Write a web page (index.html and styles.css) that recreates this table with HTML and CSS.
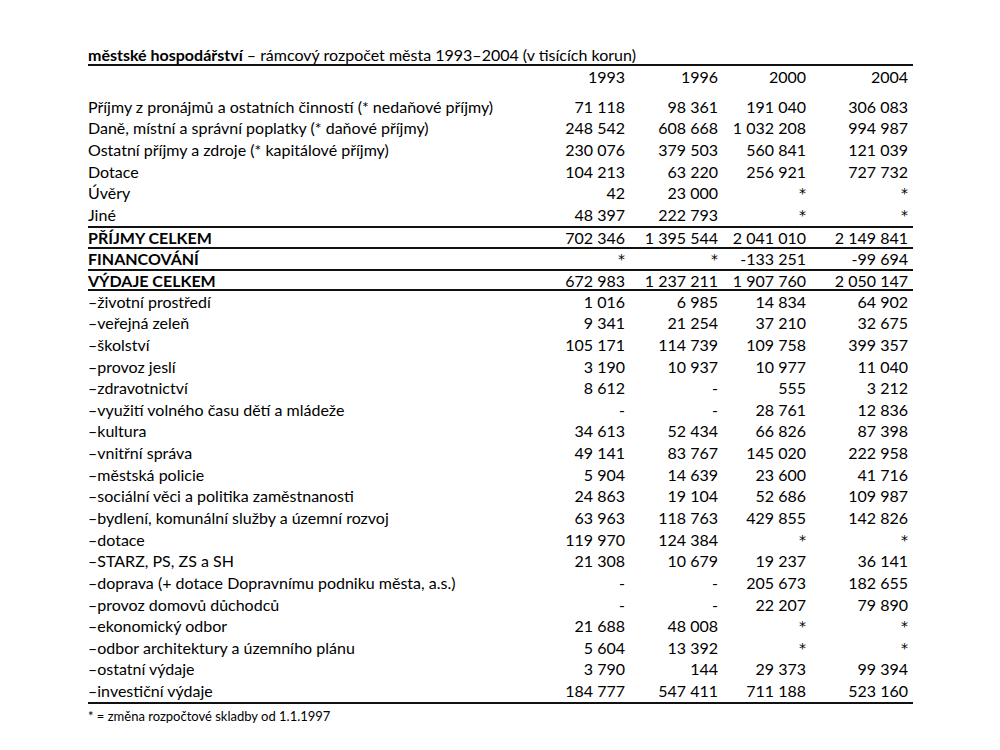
FILE: index.html
```html
<!DOCTYPE html>
<html lang="cs">
<head>
<meta charset="utf-8">
<title>městské hospodářství</title>
<link rel="stylesheet" href="styles.css">
</head>
<body>
<div class="sheet">
  <div class="title"><b>městské hospodářství</b> – rámcový rozpočet města 1993–2004 (v tisících korun)</div>
  <div class="row head"><span></span><span>1993</span><span>1996</span><span>2000</span><span>2004</span></div>
  <div class="body">
    <div class="row"><span>Příjmy z pronájmů a ostatních činností (* nedaňové příjmy)</span><span>71 118</span><span>98 361</span><span>191 040</span><span>306 083</span></div>
    <div class="row"><span>Daně, místní a správní poplatky (* daňové příjmy)</span><span>248 542</span><span>608 668</span><span>1 032 208</span><span>994 987</span></div>
    <div class="row"><span>Ostatní příjmy a zdroje (* kapitálové příjmy)</span><span>230 076</span><span>379 503</span><span>560 841</span><span>121 039</span></div>
    <div class="row"><span>Dotace</span><span>104 213</span><span>63 220</span><span>256 921</span><span>727 732</span></div>
    <div class="row"><span>Úvěry</span><span>42</span><span>23 000</span><span class="ast">*</span><span class="ast">*</span></div>
    <div class="row"><span>Jiné</span><span>48 397</span><span>222 793</span><span class="ast">*</span><span class="ast">*</span></div>
    <div class="row total"><span>PŘÍJMY CELKEM</span><span>702 346</span><span>1 395 544</span><span>2 041 010</span><span>2 149 841</span></div>
    <div class="row total"><span>FINANCOVÁNÍ</span><span class="ast">*</span><span class="ast">*</span><span>-133 251</span><span>-99 694</span></div>
    <div class="row total last"><span>VÝDAJE CELKEM</span><span>672 983</span><span>1 237 211</span><span>1 907 760</span><span>2 050 147</span></div>
    <div class="row"><span>–životní prostředí</span><span>1 016</span><span>6 985</span><span>14 834</span><span>64 902</span></div>
    <div class="row"><span>–veřejná zeleň</span><span>9 341</span><span>21 254</span><span>37 210</span><span>32 675</span></div>
    <div class="row"><span>–školství</span><span>105 171</span><span>114 739</span><span>109 758</span><span>399 357</span></div>
    <div class="row"><span>–provoz jeslí</span><span>3 190</span><span>10 937</span><span>10 977</span><span>11 040</span></div>
    <div class="row"><span>–zdravotnictví</span><span>8 612</span><span>-</span><span>555</span><span>3 212</span></div>
    <div class="row"><span>–využití volného času dětí a mládeže</span><span>-</span><span>-</span><span>28 761</span><span>12 836</span></div>
    <div class="row"><span>–kultura</span><span>34 613</span><span>52 434</span><span>66 826</span><span>87 398</span></div>
    <div class="row"><span>–vnitřní správa</span><span>49 141</span><span>83 767</span><span>145 020</span><span>222 958</span></div>
    <div class="row"><span>–městská policie</span><span>5 904</span><span>14 639</span><span>23 600</span><span>41 716</span></div>
    <div class="row"><span>–sociální věci a politika zaměstnanosti</span><span>24 863</span><span>19 104</span><span>52 686</span><span>109 987</span></div>
    <div class="row"><span>–bydlení, komunální služby a územní rozvoj</span><span>63 963</span><span>118 763</span><span>429 855</span><span>142 826</span></div>
    <div class="row"><span>–dotace</span><span>119 970</span><span>124 384</span><span class="ast">*</span><span class="ast">*</span></div>
    <div class="row"><span>–STARZ, PS, ZS a SH</span><span>21 308</span><span>10 679</span><span>19 237</span><span>36 141</span></div>
    <div class="row"><span>–doprava (+ dotace Dopravnímu podniku města, a.s.)</span><span>-</span><span>-</span><span>205 673</span><span>182 655</span></div>
    <div class="row"><span>–provoz domovů důchodců</span><span>-</span><span>-</span><span>22 207</span><span>79 890</span></div>
    <div class="row"><span>–ekonomický odbor</span><span>21 688</span><span>48 008</span><span class="ast">*</span><span class="ast">*</span></div>
    <div class="row"><span>–odbor architektury a územního plánu</span><span>5 604</span><span>13 392</span><span class="ast">*</span><span class="ast">*</span></div>
    <div class="row"><span>–ostatní výdaje</span><span>3 790</span><span>144</span><span>29 373</span><span>99 394</span></div>
    <div class="row end"><span>–investiční výdaje</span><span>184 777</span><span>547 411</span><span>711 188</span><span>523 160</span></div>
  </div>
  <div class="note">* = změna rozpočtové skladby od 1.1.1997</div>
</div>
</body>
</html>
```
FILE: styles.css
```css
html, body {
  margin: 0;
  padding: 0;
  background: #fff;
}
body {
  font-family: Lato, "Open Sans", sans-serif;
  font-size: 16px;
  color: #000;
}
.sheet {
  width: 825px;
  margin: 45px 0 0 88px;
}
.title {
  height: 19px;
  line-height: 19px;
  border-bottom: 2px solid #111;
  white-space: nowrap;
}
.title b {
  font-weight: 700;
}
.row {
  display: grid;
  grid-template-columns: 1fr 90px 93px 88px 102px;
  height: 21.65px;
  align-items: center;
  box-sizing: border-box;
  line-height: 20px;
}
.row span {
  white-space: nowrap;
  padding-right: 5px;
  text-align: right;
}
.row span:first-child {
  text-align: left;
  padding-right: 0;
}
.row .ast {
  font-family: "DejaVu Sans", sans-serif;
  font-size: 14px;
}
.head {
  height: 21px;
}
.body {
  margin-top: 9px;
}
.total {
  border-top: 2px solid #111;
}
.total span:first-child {
  font-weight: 700;
}
.last {
  border-bottom: 2px solid #111;
}
.end {
  height: 24px;
  padding-top: 1px;
  align-items: start;
  border-bottom: 2px solid #111;
}
.note {
  font-size: 13px;
  line-height: 18px;
  margin-top: 3px;
}
```
